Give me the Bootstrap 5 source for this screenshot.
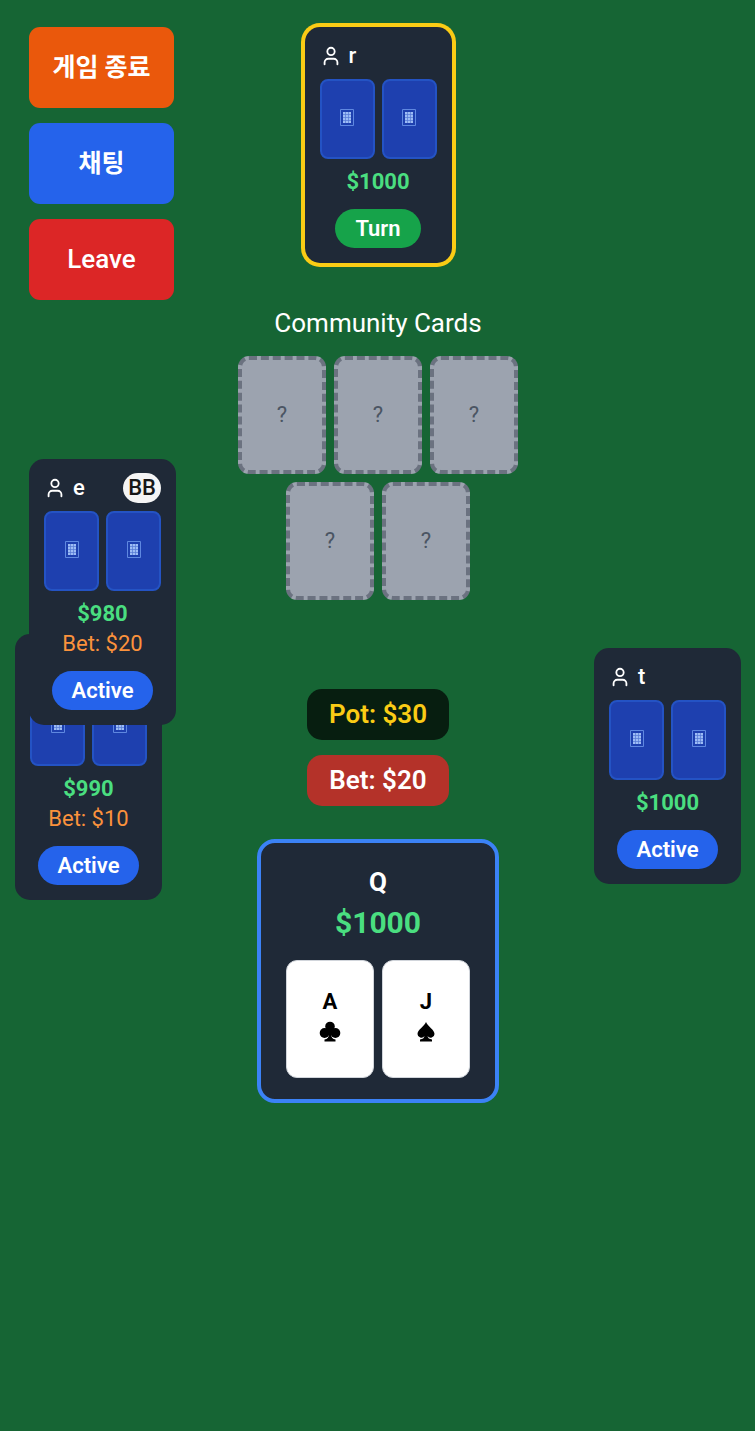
<!DOCTYPE html>
<html lang="ko">
<head>
<meta charset="utf-8">
<meta name="viewport" content="width=device-width, initial-scale=1">
<title>Poker Table</title>
<link href="https://cdn.jsdelivr.net/npm/bootstrap@5.3.0/dist/css/bootstrap.min.css" rel="stylesheet">
<style>
  body { background: #166534; color: #fff; font-family: Roboto, "Noto Sans CJK KR", sans-serif; font-size: 22px; line-height: 30px; }
  .table-grid { display: grid; grid-template-columns: 1fr 280px 1fr; padding: 27px 14px 0 15px; }
  .fw-mid { font-weight: 500; }

  .game-actions { width: 145px; gap: 15px; margin-left: 14px; }
  .game-actions .btn { height: 81px; border: 0; border-radius: 11px; padding: 0; color: #fff; font-size: 26px; font-weight: 500; }
  .game-actions .btn:lang(ko) { font-size: 25px; font-weight: 700; }
  .btn-end { --bs-btn-bg: #ea580c; --bs-btn-hover-bg: #c2410c; }
  .btn-chat { --bs-btn-bg: #2563eb; --bs-btn-hover-bg: #1d4ed8; }
  .btn-leave { --bs-btn-bg: #dc2626; --bs-btn-hover-bg: #b91c1c; }

  .seat { width: 147px; padding: 14px 15px 15px; border-radius: 15px; background: #1f2937; }
  .seat-turn { box-shadow: 0 0 0 4px #facc15; }
  .seat-head { height: 30px; gap: 7px; margin-bottom: 8px; }
  .seat-cards { gap: 7px; margin-bottom: 8px; }
  .card-back { flex: 1; height: 80px; padding-bottom: 3px; border: 2px solid #2453c4; border-radius: 8px; background: #1e40af; }
  .chips { color: #4ade80; font-weight: 700; }
  .wager { color: #fb923c; }
  .blind { border-radius: 15px; padding: 0 5px; background: #f5f5f5; color: #171717; font-weight: 500; }
  .state { height: 39px; line-height: 39px; border-radius: 20px; padding: 0 20px; margin-top: 12px; font-weight: 600; background: #2563eb; }
  .state-turn { background: #16a34a; }
  .seat-upper { z-index: 1; margin: 159px 0 0 14px; }
  .seat-lower { margin-top: -91px; }
  .seat-right { margin-top: 621px; }

  .board-title { font-size: 26px; line-height: 36px; font-weight: 400; margin: 42px 0 15px; }
  .board { gap: 8px; }
  .slot, .face { width: 88px; height: 118px; border-radius: 11px; }
  .slot { border: 4px dashed #6b7280; background: #9ca3af; color: #4b5563; }
  .totals { gap: 15px; margin: 89px 0 33px; }
  .total { width: 142px; height: 51px; line-height: 51px; border-radius: 15px; font-size: 26px; font-weight: 600; }
  .total-pot { background: #071e10; color: #facc15; }
  .total-bet { background: #b43229; }

  .hero { width: 242px; border: 4px solid #3b82f6; border-radius: 18px; background: #1f2937; padding: 21px 0; }
  .hero-name { font-size: 26px; line-height: 36px; }
  .hero-chips { font-size: 30px; line-height: 46px; margin-bottom: 14px; }
  .face { border: 1px solid #d1d5db; padding-bottom: 5px; background: #fff; color: #000; }
</style>
</head>
<body>
<svg class="d-none" aria-hidden="true">
  <symbol id="user" viewBox="0 0 24 24" fill="none" stroke="#fff" stroke-width="2" stroke-linecap="round" stroke-linejoin="round">
    <path d="M19 21v-2a4 4 0 0 0-4-4H9a4 4 0 0 0-4 4v2"/><circle cx="12" cy="7" r="4"/>
  </symbol>
  <symbol id="back" viewBox="0 0 14 18">
    <path d="M.5.5h13v16H.5z" fill="none" stroke="#5f88e0"/>
    <path d="M3 3h8v11H3z" fill="#9dbcf5"/>
    <path d="M5.500 3v11M8.500 3v11M3 5.500h8M3 8.500h8M3 11.500h8" stroke="#5578d4" stroke-width=".7"/>
  </symbol>
</svg>

<main class="table-grid min-vh-100">
  <section class="d-flex flex-column align-items-start">
    <div class="game-actions d-flex flex-column">
      <button type="button" class="btn btn-end" lang="ko">게임 종료</button>
      <button type="button" class="btn btn-chat" lang="ko">채팅</button>
      <button type="button" class="btn btn-leave" lang="en">Leave</button>
    </div>

    <article class="seat seat-upper position-relative d-flex flex-column">
      <div class="seat-head d-flex align-items-center">
        <svg width="22" height="22" aria-hidden="true"><use href="#user"/></svg>
        <span class="fw-mid">e</span><span class="blind ms-auto">BB</span>
      </div>
      <div class="seat-cards d-flex">
        <div class="card-back d-flex align-items-center justify-content-center"><svg width="14" height="18"><use href="#back"/></svg></div>
        <div class="card-back d-flex align-items-center justify-content-center"><svg width="14" height="18"><use href="#back"/></svg></div>
      </div>
      <div class="chips text-center">$980</div>
      <div class="wager text-center">Bet: $20</div>
      <span class="state align-self-center">Active</span>
    </article>

    <article class="seat seat-lower d-flex flex-column">
      <div class="seat-head d-flex align-items-center">
        <svg width="22" height="22" aria-hidden="true"><use href="#user"/></svg>
      </div>
      <div class="seat-cards d-flex">
        <div class="card-back d-flex align-items-center justify-content-center"><svg width="14" height="18"><use href="#back"/></svg></div>
        <div class="card-back d-flex align-items-center justify-content-center"><svg width="14" height="18"><use href="#back"/></svg></div>
      </div>
      <div class="chips text-center">$990</div>
      <div class="wager text-center">Bet: $10</div>
      <span class="state align-self-center">Active</span>
    </article>
  </section>

  <section class="d-flex flex-column align-items-center">
    <article class="seat seat-turn d-flex flex-column">
      <div class="seat-head d-flex align-items-center">
        <svg width="22" height="22" aria-hidden="true"><use href="#user"/></svg>
        <span class="fw-mid">r</span>
      </div>
      <div class="seat-cards d-flex">
        <div class="card-back d-flex align-items-center justify-content-center"><svg width="14" height="18"><use href="#back"/></svg></div>
        <div class="card-back d-flex align-items-center justify-content-center"><svg width="14" height="18"><use href="#back"/></svg></div>
      </div>
      <div class="chips text-center">$1000</div>
      <span class="state state-turn align-self-center">Turn</span>
    </article>

    <h1 class="board-title">Community Cards</h1>
    <div class="board d-flex flex-wrap justify-content-center">
      <div class="slot d-flex align-items-center justify-content-center">?</div>
      <div class="slot d-flex align-items-center justify-content-center">?</div>
      <div class="slot d-flex align-items-center justify-content-center">?</div>
      <div class="slot d-flex align-items-center justify-content-center">?</div>
      <div class="slot d-flex align-items-center justify-content-center">?</div>
    </div>

    <div class="totals d-flex flex-column">
      <div class="total total-pot text-center">Pot: $30</div>
      <div class="total total-bet text-center">Bet: $20</div>
    </div>

    <article class="hero text-center">
      <div class="hero-name fw-bold">Q</div>
      <div class="hero-chips chips">$1000</div>
      <div class="board d-flex justify-content-center">
        <div class="face d-flex flex-column align-items-center justify-content-center">
          <span class="fw-bold">A</span>
          <svg width="22" height="30" viewBox="0 0 22 30" aria-label="clubs"><circle cx="11" cy="9.500" r="4.800"/><circle cx="5.600" cy="16" r="4.900"/><circle cx="16.400" cy="16" r="4.900"/><path d="M9 12h4l-1 4q0 6 4.500 6.500V24.500h-11v-2Q10 22 10 16z"/></svg>
        </div>
        <div class="face d-flex flex-column align-items-center justify-content-center">
          <span class="fw-bold">J</span>
          <svg width="22" height="30" viewBox="0 0 22 30" aria-label="spades"><path d="M11 5c2 5 8.500 7.500 8.500 12a3.800 3.800 0 0 1-7 2q.5 3 4.500 3.500v2H5v-2q4-.5 4.500-3.500a3.800 3.800 0 0 1-7-2C2.500 12.500 9 10 11 5z"/></svg>
        </div>
      </div>
    </article>
  </section>

  <section class="d-flex flex-column align-items-end">
    <article class="seat seat-right d-flex flex-column">
      <div class="seat-head d-flex align-items-center">
        <svg width="22" height="22" aria-hidden="true"><use href="#user"/></svg>
        <span class="fw-mid">t</span>
      </div>
      <div class="seat-cards d-flex">
        <div class="card-back d-flex align-items-center justify-content-center"><svg width="14" height="18"><use href="#back"/></svg></div>
        <div class="card-back d-flex align-items-center justify-content-center"><svg width="14" height="18"><use href="#back"/></svg></div>
      </div>
      <div class="chips text-center">$1000</div>
      <span class="state align-self-center">Active</span>
    </article>
  </section>
</main>
<script src="https://cdn.jsdelivr.net/npm/bootstrap@5.3.0/dist/js/bootstrap.bundle.min.js"></script>
</body>
</html>
